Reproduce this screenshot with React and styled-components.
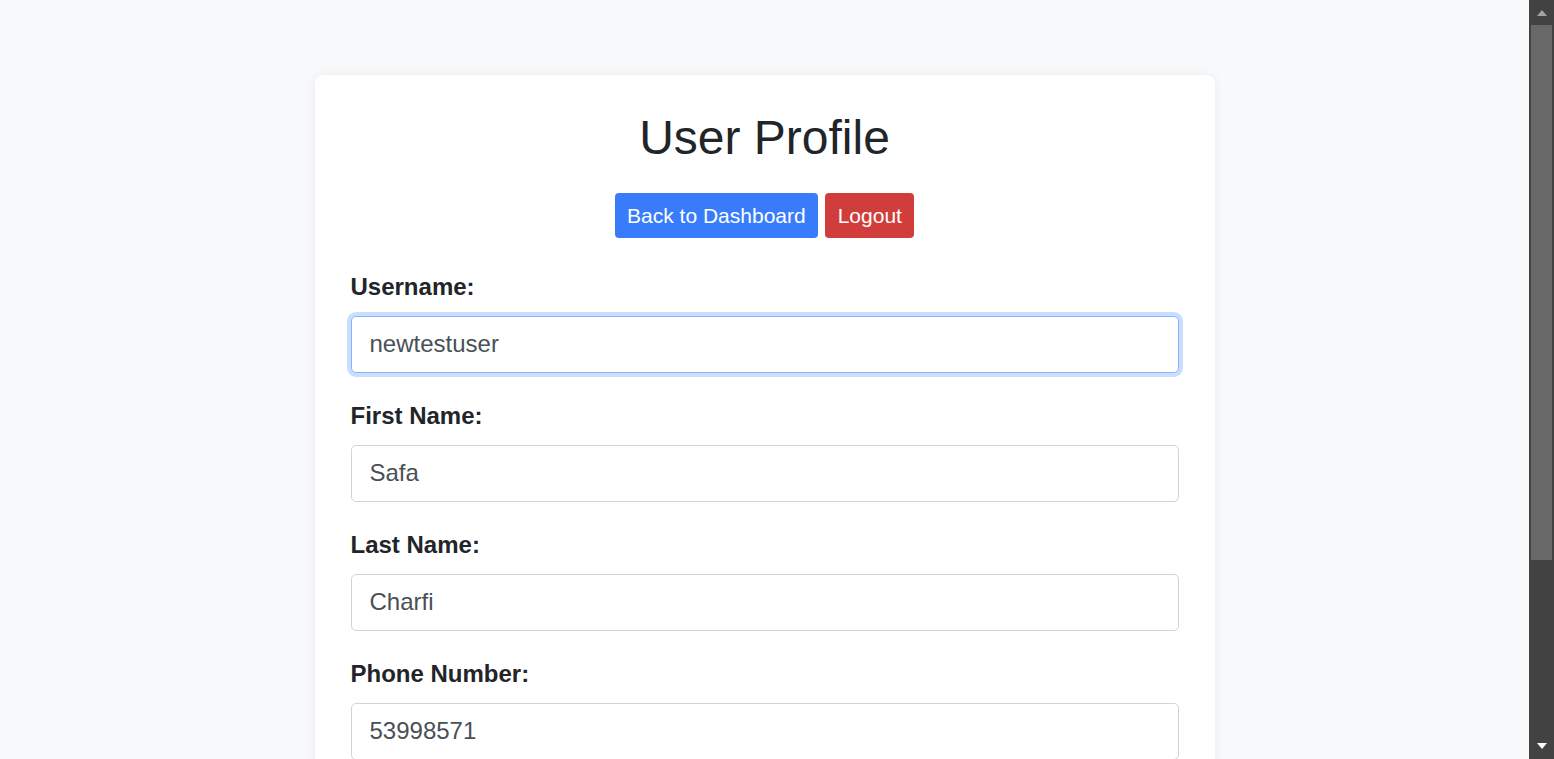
import React from "react";
import styled, { createGlobalStyle } from "styled-components";

const GlobalStyle = createGlobalStyle`
    html, body {
        margin: 0;
        padding: 0;
        background: #f8f9fa;
        font-family: "Liberation Sans", Arial, sans-serif;
        color: #212529;
    }

    ::-webkit-scrollbar {
        width: 0;
    }
`;

const fields = [
    { id: "username", label: "Username:", value: "newtestuser", focused: true },
    { id: "firstName", label: "First Name:", value: "Safa" },
    { id: "lastName", label: "Last Name:", value: "Charfi" },
    { id: "phone", label: "Phone Number:", value: "53998571" },
    { id: "email", label: "Email:", value: "safa.charfi@example.com" },
];

const App = () => {
    return (
        <Page>
            <GlobalStyle />
            <Card>
                <Title>User Profile</Title>
                <ButtonRow>
                    <Button $variant="primary">Back to Dashboard</Button>
                    <Button $variant="danger">Logout</Button>
                </ButtonRow>
                <Form onSubmit={(e) => e.preventDefault()}>
                    {fields.map((field) => (
                        <Field key={field.id}>
                            <Label htmlFor={field.id}>{field.label}</Label>
                            <Input
                                id={field.id}
                                type="text"
                                defaultValue={field.value}
                                autoFocus={field.focused}
                                $focused={field.focused}
                            />
                        </Field>
                    ))}
                    <SubmitRow>
                        <Button type="submit" $variant="success">Update Profile</Button>
                    </SubmitRow>
                </Form>
            </Card>
            {/* dark window scrollbar drawn over the right edge */}
            <ScrollTrack>
                <ArrowUp />
                <ScrollThumb />
                <ArrowDown />
            </ScrollTrack>
        </Page>
    );
};

export default App;

const Page = styled.div`
    padding: 75px 25px 40px 0;
    display: flex;
    justify-content: center;
`;

const Card = styled.div`
    width: 900px;
    box-sizing: border-box;
    background: #ffffff;
    border-radius: 8px;
    box-shadow: 0 0 10px rgba(0, 0, 0, 0.06);
    padding: 34px 36px 36px;
`;

const Title = styled.h1`
    margin: 0 0 26px;
    font-size: 48px;
    font-weight: 400;
    line-height: 1.2;
    text-align: center;
    color: #212529;
`;

const ButtonRow = styled.div`
    display: flex;
    justify-content: center;
    gap: 7px;
    margin-bottom: 30px;
`;

const colors = {
    primary: "#387cfc",
    danger: "#d03d3a",
    success: "#2e8a57",
};

const Button = styled.button`
    height: 45px;
    padding: 0 12.5px;
    border: none;
    border-radius: 4px;
    background: ${(props) => colors[props.$variant]};
    color: #ffffff;
    font-family: "Liberation Sans", Arial, sans-serif;
    font-size: 21px;
    line-height: 45px;
    cursor: pointer;
`;

const Form = styled.form`
    display: flex;
    flex-direction: column;
    gap: 24px;
`;

const Field = styled.div`
    display: flex;
    flex-direction: column;
    gap: 12px;
`;

const Label = styled.label`
    padding-top: 2px;
    font-size: 24px;
    font-weight: 700;
    line-height: 34px;
    color: #212529;
`;

const Input = styled.input`
    box-sizing: border-box;
    width: 100%;
    height: 57px;
    padding: 0 18px;
    border: 1px solid ${(props) => (props.$focused ? "#86b7fe" : "#ced4da")};
    border-radius: 5px;
    font-family: "Liberation Sans", Arial, sans-serif;
    font-size: 24px;
    color: #495057;
    background: #ffffff;
    outline: none;
    box-shadow: ${(props) => (props.$focused ? "0 0 0 4px rgba(13, 110, 253, 0.22)" : "none")};

    &:focus {
        border-color: #86b7fe;
        box-shadow: 0 0 0 4px rgba(13, 110, 253, 0.22);
    }
`;

const SubmitRow = styled.div`
    display: flex;
`;

const ScrollTrack = styled.div`
    position: fixed;
    top: 0;
    right: 0;
    bottom: 0;
    width: 25px;
    background: #424242;
    display: flex;
    flex-direction: column;
    align-items: center;
`;

const ArrowUp = styled.div`
    margin-top: 10px;
    width: 0;
    height: 0;
    border-left: 5px solid transparent;
    border-right: 5px solid transparent;
    border-bottom: 6px solid #a3a3a3;
`;

const ScrollThumb = styled.div`
    margin-top: 9px;
    width: 21px;
    height: 535px;
    background: #686868;
`;

const ArrowDown = styled.div`
    margin-top: auto;
    margin-bottom: 10px;
    width: 0;
    height: 0;
    border-left: 5px solid transparent;
    border-right: 5px solid transparent;
    border-top: 6px solid #ffffff;
`;
